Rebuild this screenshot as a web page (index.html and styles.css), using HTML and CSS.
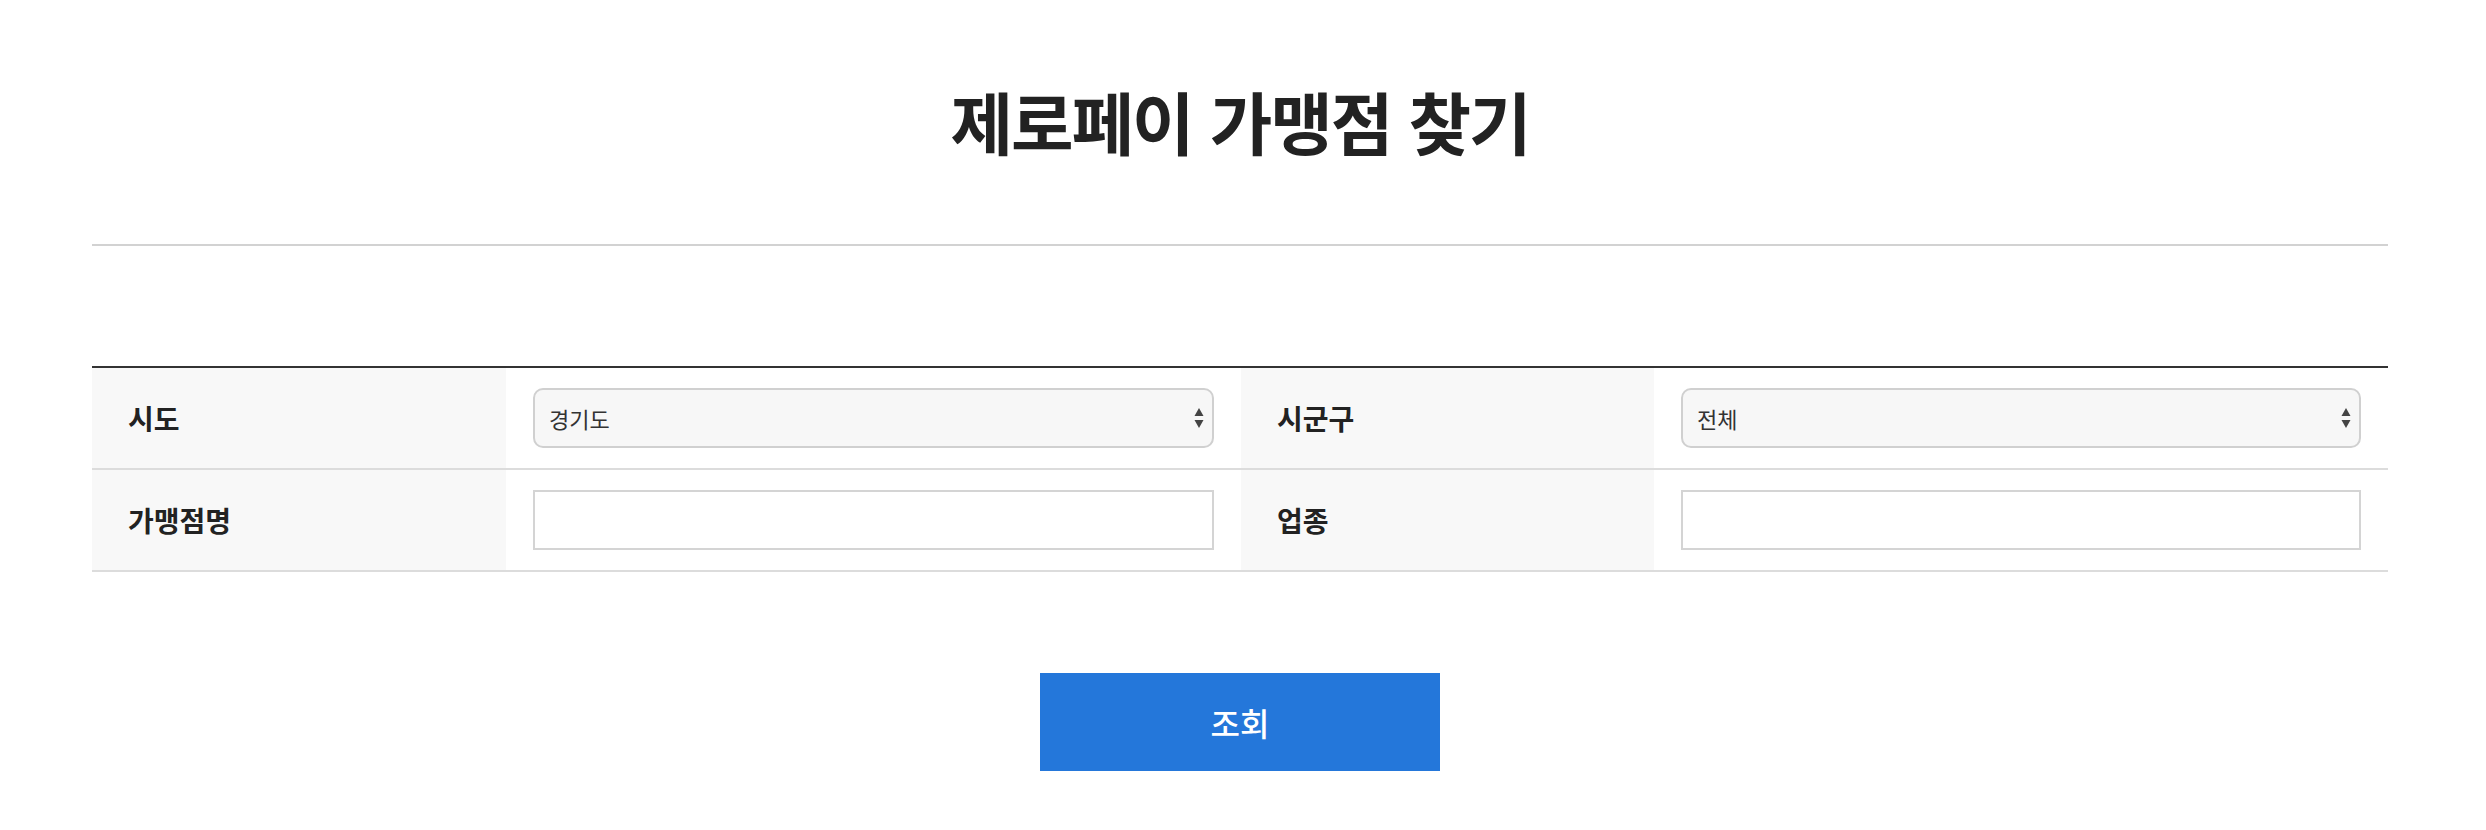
FILE: index.html
```html
<!DOCTYPE html>
<html lang="ko">
<head>
<meta charset="utf-8">
<title>제로페이 가맹점 찾기</title>
<link rel="stylesheet" href="styles.css">
</head>
<body>
<div class="page">
  <header class="head">
    <h1 class="title">제로페이 가맹점 찾기</h1>
  </header>
  <div class="spacer"></div>
  <div class="form">
    <div class="label">시도</div>
    <div class="cell">
      <div class="select-wrap">
        <select class="select"><option>경기도</option></select>
        <svg class="arrow" width="10" height="20" viewBox="0 0 10 20"><path d="M5 0 L9.5 8 L0.5 8 Z M0.5 12 L9.5 12 L5 20 Z" fill="#444"/></svg>
      </div>
    </div>
    <div class="label">시군구</div>
    <div class="cell">
      <div class="select-wrap">
        <select class="select"><option>전체</option></select>
        <svg class="arrow" width="10" height="20" viewBox="0 0 10 20"><path d="M5 0 L9.5 8 L0.5 8 Z M0.5 12 L9.5 12 L5 20 Z" fill="#444"/></svg>
      </div>
    </div>
    <div class="label">가맹점명</div>
    <div class="cell"><input class="input" type="text"></div>
    <div class="label">업종</div>
    <div class="cell"><input class="input" type="text"></div>
  </div>
  <div class="actions">
    <button class="btn" type="button">조회</button>
  </div>
</div>
</body>
</html>
```
FILE: styles.css
```css
html, body {
  margin: 0;
  padding: 0;
  background: #fff;
  font-family: "Noto Sans CJK KR", "Noto Sans", sans-serif;
  color: #222;
}
.page {
  width: 2296px;
  margin-left: 92px;
}
.head {
  height: 244px;
  border-bottom: 2px solid #d2d2d2;
  display: flex;
  align-items: center;
  justify-content: center;
}
.title {
  margin: 0;
  font-size: 68px;
  font-weight: 700;
  letter-spacing: -2px;
  color: #222;
  line-height: 1;
  padding-bottom: 2px;
}
.spacer {
  height: 120px;
}
.form {
  border-top: 2px solid #333;
  display: grid;
  grid-template-columns: 414px 735px 413px 734px;
}
.label, .cell {
  height: 102px;
  border-bottom: 2px solid #dcdcdc;
  display: flex;
  align-items: center;
  box-sizing: border-box;
}
.label {
  background: #f8f8f8;
  padding-left: 36px;
  font-size: 28px;
  font-weight: 700;
  color: #222;
}
.cell {
  padding: 0 27px;
}
.select-wrap {
  position: relative;
  width: 100%;
}
.select {
  -webkit-appearance: none;
  appearance: none;
  width: 100%;
  height: 60px;
  border: 2px solid #d0d0d0;
  border-radius: 10px;
  background: #f7f7f7;
  font-family: "Noto Sans CJK KR", sans-serif;
  font-size: 22px;
  color: #333;
  padding: 0 14px;
  margin: 0;
  outline: none;
}
.arrow {
  position: absolute;
  right: 10px;
  top: 20px;
  pointer-events: none;
}
.input {
  width: 100%;
  height: 60px;
  box-sizing: border-box;
  border: 2px solid #d4d4d4;
  border-radius: 0;
  background: #fff;
  margin: 0;
  outline: none;
}
.actions {
  display: flex;
  justify-content: center;
  padding-top: 101px;
}
.btn {
  width: 400px;
  height: 98px;
  border: 0;
  border-radius: 0;
  background: #2477da;
  color: #fff;
  font-family: "Noto Sans CJK KR", sans-serif;
  font-size: 32px;
  font-weight: 500;
  cursor: pointer;
}
```
